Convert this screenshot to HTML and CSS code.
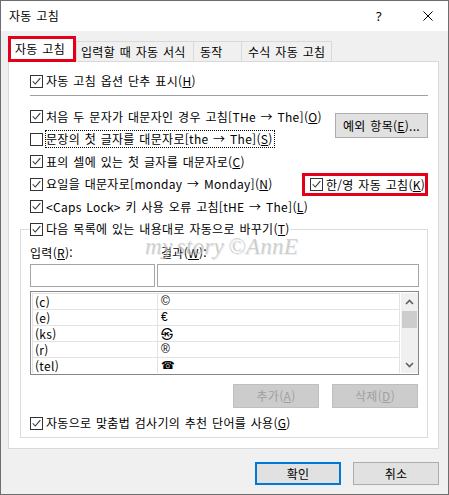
FILE: index.html
```html
<!DOCTYPE html>
<html lang="ko">
<head>
<meta charset="utf-8">
<title>자동 고침</title>
<link rel="stylesheet" href="styles.css">
</head>
<body>
<div class="dialog">
  <div class="titlebar">
    <span class="title">자동 고침</span>
    <span class="help">?</span>
    <svg class="close" width="10" height="10" viewBox="0 0 10 10"><path d="M0.5 0.5L9.5 9.5M9.5 0.5L0.5 9.5"/></svg>
  </div>
  <div class="tabs">
    <div class="tab active">자동 고침</div>
    <div class="tab t2">입력할 때 자동 서식</div>
    <div class="tab t3">동작</div>
    <div class="tab t4">수식 자동 고침</div>
  </div>
  <div class="panel">
    <div class="watermark">my story ©AnnE</div>
    <div class="row first">
      <span class="cb"><svg viewBox="0 0 13 13"><path d="M2 6.2L5 9.5L11 2.5"/></svg></span>
      <span class="lbl">자동 고침 옵션 단추 표시(<u>H</u>)</span>
    </div>
    <div class="sep"></div>
    <div class="options">
      <div class="col-left">
        <div class="row r23">
          <span class="cb"><svg viewBox="0 0 13 13"><path d="M2 6.2L5 9.5L11 2.5"/></svg></span>
          <span class="lbl">처음 두 문자가 대문자인 경우 고침[THe → The](<u>O</u>)</span>
        </div>
        <div class="row r22">
          <span class="cb"></span>
          <span class="lbl focus">문장의 첫 글자를 대문자로[the → The](<u>S</u>)</span>
        </div>
        <div class="row r23">
          <span class="cb"><svg viewBox="0 0 13 13"><path d="M2 6.2L5 9.5L11 2.5"/></svg></span>
          <span class="lbl">표의 셀에 있는 첫 글자를 대문자로(<u>C</u>)</span>
        </div>
        <div class="row r22">
          <span class="cb"><svg viewBox="0 0 13 13"><path d="M2 6.2L5 9.5L11 2.5"/></svg></span>
          <span class="lbl">요일을 대문자로[monday → Monday](<u>N</u>)</span>
        </div>
        <div class="row r23">
          <span class="cb"><svg viewBox="0 0 13 13"><path d="M2 6.2L5 9.5L11 2.5"/></svg></span>
          <span class="lbl">&lt;Caps Lock&gt; 키 사용 오류 고침[tHE → The](<u>L</u>)</span>
        </div>
      </div>
      <div class="col-right">
        <button class="btn except">예외 항목(<u>E</u>)...</button>
        <div class="redbox">
          <span class="cb"><svg viewBox="0 0 13 13"><path d="M2 6.2L5 9.5L11 2.5"/></svg></span>
          <span class="lbl">한/영 자동 고침(<u>K</u>)</span>
        </div>
      </div>
    </div>
    <fieldset class="group">
      <legend class="legend">
        <span class="row leg">
          <span class="cb"><svg viewBox="0 0 13 13"><path d="M2 6.2L5 9.5L11 2.5"/></svg></span>
          <span class="lbl">다음 목록에 있는 내용대로 자동으로 바꾸기(<u>T</u>)</span>
        </span>
      </legend>
      <div class="labels">
        <span>입력(<u>R</u>):</span>
        <span class="lbl2">결과(<u>W</u>):</span>
      </div>
      <div class="inputs">
        <div class="input"></div>
        <div class="input"></div>
      </div>
      <div class="list">
        <div class="grid">
          <div class="cell">(c)</div><div class="cell sym">©</div>
          <div class="cell">(e)</div><div class="cell sym">€</div>
          <div class="cell">(ks)</div><div class="cell">㉿</div>
          <div class="cell">(r)</div><div class="cell sym">®</div>
          <div class="cell">(tel)</div><div class="cell tel">☎</div>
        </div>
        <div class="scrollbar">
          <div class="sb-btn"><svg width="9" height="6" viewBox="0 0 9 6"><path d="M1 5L4.5 1.5L8 5"/></svg></div>
          <div class="thumb"></div>
          <div class="sb-space"></div>
          <div class="sb-btn"><svg width="9" height="6" viewBox="0 0 9 6"><path d="M1 1L4.5 4.5L8 1"/></svg></div>
        </div>
      </div>
      <div class="actions">
        <button class="btn disabled">추가(<u>A</u>)</button>
        <button class="btn disabled">삭제(<u>D</u>)</button>
      </div>
      <div class="row last">
        <span class="cb"><svg viewBox="0 0 13 13"><path d="M2 6.2L5 9.5L11 2.5"/></svg></span>
        <span class="lbl">자동으로 맞춤법 검사기의 추천 단어를 사용(<u>G</u>)</span>
      </div>
    </fieldset>
  </div>
  <div class="footer">
    <button class="btn dlg default">확인</button>
    <button class="btn dlg">취소</button>
  </div>
</div>
</body>
</html>
```
FILE: styles.css
```css
* { box-sizing: border-box; }
html, body { margin: 0; padding: 0; background: #fff; }
body {
  font-family: "Noto Sans CJK KR", "Noto Sans", sans-serif;
  font-size: 12px;
  letter-spacing: 0.3px;
  word-spacing: 1px;
  color: #000;
}
u { text-decoration: underline; text-underline-offset: 1px; text-decoration-thickness: 1px; }

.dialog {
  width: 449px;
  height: 495px;
  border: 1px solid #6e6e6e;
  background: #f0f0f0;
  display: flex;
  flex-direction: column;
}

.titlebar {
  height: 30px;
  background: #fff;
  display: flex;
  align-items: center;
  padding-left: 8px;
  flex: none;
}
.title { flex: 1; line-height: 16px; }
.help {
  width: 14px;
  text-align: center;
  font-family: "Noto Sans", sans-serif;
  font-size: 13px;
  line-height: 16px;
  margin-right: 37px;
}
.close { margin-right: 15px; }
.close path { stroke: #000; stroke-width: 1; fill: none; }

.tabs {
  height: 30px;
  flex: none;
  display: flex;
  align-items: flex-end;
  padding: 5px 0 0 7px;
}
.tab {
  height: 20px;
  border: 1px solid #d9d9d9;
  border-bottom: none;
  background: #f0f0f0;
  padding-left: 4px;
  display: flex;
  align-items: center;
  line-height: 16px;
  white-space: nowrap;
}
.tab.active {
  position: relative;
  z-index: 1;
  height: 26px;
  width: 68px;
  margin-bottom: -1px;
  border: 3px solid #e5001a;
  background: #fff;
  padding-left: 4px;
  padding-bottom: 1px;
}
.t2 { width: 118px; }
.t3 { width: 49px; margin-left: -1px; padding-left: 6px; }
.t4 { width: 91px; margin-left: -1px; padding-left: 6px; }

.panel {
  position: relative;
  flex: none;
  height: 388px;
  margin: 0 9px 0 7px;
  border: 1px solid #d9d9d9;
  background: #fff;
  padding: 8px 10px 10px 11px;
}
.watermark {
  position: absolute;
  left: 136px;
  top: 172px;
  font-family: "Liberation Serif", serif;
  font-style: italic;
  font-size: 23px;
  letter-spacing: 0.3px;
  word-spacing: -2px;
  color: rgba(175, 175, 175, 0.55);
  text-shadow: 1px 1px 0 rgba(225, 225, 225, 0.6);
  white-space: nowrap;
  pointer-events: none;
}

.row {
  display: flex;
  align-items: center;
  white-space: nowrap;
  line-height: 16px;
}
.row.first { height: 22px; padding-left: 10px; }
.r23 { height: 23px; }
.r22 { height: 22px; }
.cb {
  flex: none;
  width: 13px;
  height: 13px;
  border: 1px solid #333;
  background: #fff;
  display: flex;
}
.cb svg { width: 11px; height: 11px; }
.cb path { fill: none; stroke: #333; stroke-width: 1.3; }
.lbl { margin-left: 3px; }
.lbl.focus {
  margin-left: 2px;
  border: 1px dotted #000;
  padding-right: 1px;
}

.sep {
  height: 1px;
  background: #a0a0a0;
  margin: 3px 0 9px 10px;
}

.options {
  display: flex;
  padding-left: 10px;
}
.col-left { flex: 1 1 0; min-width: 0; display: flex; flex-direction: column; }
.col-right { flex: none; display: flex; flex-direction: column; align-items: flex-end; }

.btn {
  font-family: inherit;
  font-size: 12px;
  letter-spacing: 0.3px;
  word-spacing: 1px;
  color: #000;
  background: #e1e1e1;
  border: 1px solid #adadad;
  padding: 0;
  line-height: 16px;
  display: flex;
  align-items: center;
  justify-content: center;
}
.except { width: 93px; height: 25px; margin-top: 8px; }
.redbox {
  margin-top: 35px;
  width: 126px;
  height: 23px;
  border: 3px solid #e5001a;
  display: flex;
  align-items: center;
  padding-left: 5px;
  white-space: nowrap;
  line-height: 16px;
}

.group {
  margin: 0;
  min-width: 0;
  border: 1px solid #dcdcdc;
  padding: 5px 9px 3px 9px;
}
.legend { padding: 0; }
.row.leg { height: 22px; }

.labels {
  display: grid;
  grid-template-columns: 125px 1fr;
  column-gap: 2px;
  height: 16px;
  line-height: 16px;
  align-items: center;
}
.lbl2 { padding-left: 4px; }

.inputs {
  display: grid;
  grid-template-columns: 125px 1fr;
  column-gap: 2px;
  margin-top: 3px;
  margin-right: -1px;
}
.input {
  height: 23px;
  border: 1px solid #a5a5a5;
  background: #fff;
}

.list {
  margin-top: 4px;
  margin-right: -1px;
  height: 84px;
  border: 1px solid #828790;
  display: flex;
  padding: 1px 0 1px 1px;
  overflow: hidden;
}
.grid {
  flex: 1;
  margin-right: 1px;
  border: 1px solid #e3e3e3;
  border-bottom: none;
  display: grid;
  grid-template-columns: 125px 1fr;
  grid-auto-rows: 16px;
  align-content: start;
  overflow: hidden;
}
.cell {
  border-bottom: 1px solid #e3e3e3;
  padding-left: 2px;
  line-height: 15px;
  white-space: nowrap;
}
.cell:nth-child(odd) { border-right: 1px solid #e3e3e3; }
.cell:nth-child(even) { padding-left: 3px; }
.cell.sym { font-family: "Liberation Sans", sans-serif; font-size: 12px; }
.cell.tel { font-family: "DejaVu Sans", sans-serif; font-size: 11px; }

.scrollbar {
  width: 17px;
  flex: none;
  background: #f0f0f0;
  display: flex;
  flex-direction: column;
}
.sb-btn {
  height: 17px;
  display: flex;
  align-items: center;
  justify-content: center;
}
.sb-btn path { fill: none; stroke: #606060; stroke-width: 1.6; }
.thumb {
  height: 17px;
  margin: 1px 1px 0 1px;
  background: #cdcdcd;
}
.sb-space { flex: 1; }

.actions {
  display: flex;
  justify-content: flex-end;
  gap: 13px;
  margin-top: 9px;
}
.btn.disabled {
  width: 86px;
  height: 24px;
  background: #cccccc;
  border-color: #bfbfbf;
  color: #a0a0a0;
}
.row.last { height: 22px; margin-top: 4px; }

.footer {
  flex: 1;
  display: flex;
  justify-content: flex-end;
  align-items: flex-start;
  gap: 12px;
  padding: 13px 9px 0 0;
}
.btn.dlg { width: 86px; height: 23px; }
.btn.default { border: 2px solid #0078d7; }
```
